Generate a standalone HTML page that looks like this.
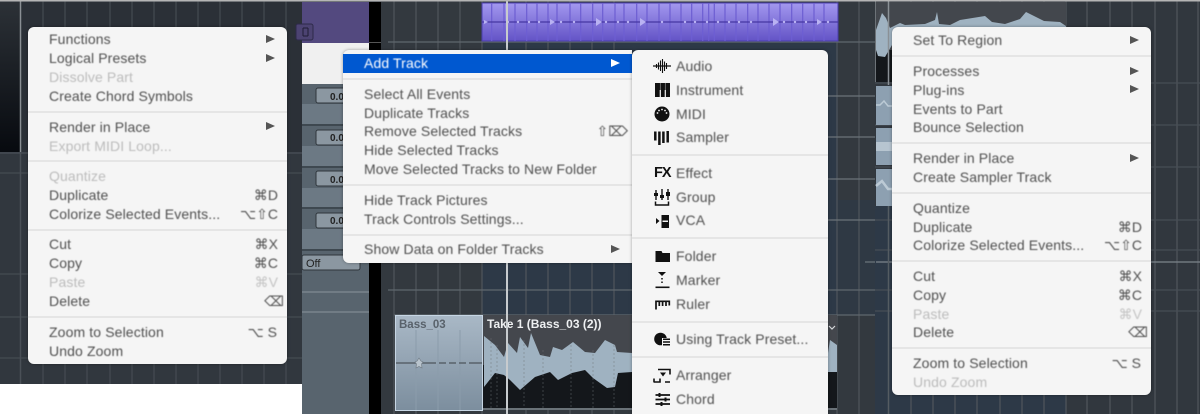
<!DOCTYPE html>
<html><head><meta charset="utf-8">
<style>
html,body{margin:0;padding:0;background:#fff}
#p{position:relative;width:1200px;height:414px;overflow:hidden;background:#fff;font-family:"Liberation Sans",sans-serif}
#bg{position:absolute;left:0;top:0}
.m{position:absolute;background:#f5f5f5;border-radius:6px;box-shadow:0 0 3px rgba(0,0,0,.35)}
.t{position:absolute;font-size:14px;letter-spacing:.12px;line-height:19px;height:19px;color:#505050;white-space:nowrap;filter:blur(.45px)}
.d{color:#bcbcbc}
.s{position:absolute;height:2px;background:#e5e5e5}
.k{position:absolute;font-size:14px;line-height:19px;height:19px;color:#505050;white-space:nowrap;text-align:right;font-family:"Liberation Sans","DejaVu Sans",sans-serif;filter:blur(.45px)}
.k i{font-style:normal;font-family:"DejaVu Sans",sans-serif;font-size:14px}
.a{position:absolute;width:0;height:0;border-left:9px solid #555;border-top:4.5px solid transparent;border-bottom:4.5px solid transparent}
.h{position:absolute;background:#0058d0}
</style></head><body><div id="p">
<svg id="bg" width="1200" height="414" viewBox="0 0 1200 414">
<defs>
<linearGradient id="dk" x1="0" y1="0" x2="0" y2="1"><stop offset="0" stop-color="#2c3137"/><stop offset="1" stop-color="#070a0f"/></linearGradient>
<linearGradient id="pu" x1="0" y1="0" x2="0" y2="1"><stop offset="0" stop-color="#a398ef"/><stop offset="1" stop-color="#6353c6"/></linearGradient>
<linearGradient id="ba" x1="0" y1="0" x2="0" y2="1"><stop offset="0" stop-color="#a9b8c6"/><stop offset="1" stop-color="#7c8e9e"/></linearGradient>
</defs>
<rect width="1200" height="414" fill="#31373e"/>
<rect y="384" width="302" height="30" fill="#fff"/>
<rect x="0" y="2" width="20" height="150" fill="url(#dk)"/>
<rect x="20" y="2" width="282" height="150" fill="#2b3037"/>
<path d="M43 0V384M65 0V384M87 0V384M110 0V384M132 0V384M154 0V384M176 0V384M198 0V384M220 0V384M242 0V384M264 0V384M286 0V384M0 173H302M0 274H302M0 317H302M0 358H302" stroke="#454b52" stroke-width="1.2" fill="none"/>
<path d="M0 153H302" stroke="#464c53" stroke-width="1.5"/>
<path d="M20.500 0V152" stroke="#8a8f94" stroke-width="1.500"/>
<path d="M20.500 152V384" stroke="#4a5057" stroke-width="1.500"/>

<!-- panel 2 left -->
<rect x="302" y="2" width="67" height="41" fill="#53497f"/>
<rect x="296" y="24" width="17" height="16" rx="2" fill="#4c4372" stroke="#2e2a4a"/>
<path d="M303 28v8M308 28v8M303 28h5M303 36h5" stroke="#201d35" fill="none"/>
<rect x="302" y="43" width="67" height="41" fill="#f0f0f0"/>
<rect x="302" y="84" width="67" height="330" fill="#58646e"/>
<rect x="302" y="104" width="67" height="20" fill="#6c7984"/>
<rect x="302" y="146" width="67" height="20" fill="#6c7984"/>
<rect x="302" y="188" width="67" height="20" fill="#6c7984"/>
<rect x="302" y="229" width="67" height="20" fill="#6c7984"/>
<path d="M302 125H369M302 167H369M302 208H369M302 250H369" stroke="#3e4850" stroke-width="2"/>
<g fill="#8b97a1" stroke="#2f363c"><rect x="316" y="88" width="40" height="15" rx="2"/><rect x="316" y="130" width="40" height="15" rx="2"/><rect x="316" y="171" width="40" height="15" rx="2"/><rect x="316" y="213" width="40" height="15" rx="2"/><rect x="302" y="255" width="58" height="15" rx="2"/></g>
<g font-family="Liberation Sans,sans-serif" font-size="10" font-weight="bold" fill="#222"><text x="330" y="100">0.0</text><text x="330" y="141">0.0</text><text x="330" y="183">0.0</text><text x="330" y="224">0.0</text></g>
<text x="306" y="267" font-family="Liberation Sans,sans-serif" font-size="11" fill="#222">Off</text>
<path d="M302 292H381M302 312H381" stroke="#8a949c" stroke-width="1"/>
<rect x="369" y="2" width="12" height="412" fill="#000"/>
<rect x="369" y="42" width="12" height="1" fill="#555"/>
<rect x="381" y="2" width="494" height="412" fill="#33393f"/>
<rect x="482" y="42" width="356" height="273" fill="#2d3947"/>
<rect x="838" y="200" width="37" height="115" fill="#2f3944"/>
<path d="M394 0V414M416 0V414M438 0V414M460 0V414M482 0V414M526 0V414M548 0V414M570 0V414M592 0V414M614 0V414M837 0V414M859 0V414" stroke="#50565c" stroke-width="1.200"/>
<path d="M388 42H875M388 290H875M394 315H875" stroke="#5f676e" stroke-width="1.200"/>
<path d="M828 96H875M828 137H875M828 179H875M828 220H875" stroke="#6b7379" stroke-width="1.200"/>
<path d="M865 262H875" stroke="#7a8288"/>

<!-- purple strip -->
<rect x="482" y="3" width="356" height="38" fill="url(#pu)" stroke="#4a3dac"/>
<path d="M491.700 3V41M504 3V41M515 3V41M526.700 3V41M537 3V41M548 3V41M557 3V41M570 3V41M580.700 3V41M592.700 3V41M602.700 3V41M615 3V41M624 3V41M636.700 3V41M647 3V41M659 3V41M670 3V41M681 3V41M691.700 3V41M702.700 3V41M708.700 3V41M714.300 3V41M725 3V41M736 3V41M747.700 3V41M758 3V41M769 3V41M780 3V41M791.700 3V41M802.700 3V41M814 3V41M824 3V41" stroke="#6d5ed2" stroke-width="1.200"/>
<path d="M482 22H838" stroke="#4637a2" stroke-width="1.200"/>
<g fill="#b9b2f2"><path d="M550 19l5 3-5 3z"/><path d="M596 18l6 4-6 4z"/><path d="M640 18l6 4-6 4z"/><path d="M484 20l4 2-4 2z"/><path d="M773 18l6 4-6 4z"/><path d="M817 19l5 3-5 3z"/><circle cx="508" cy="22" r="1.200"/><circle cx="518" cy="22" r="1.200"/><circle cx="529" cy="22" r="1.200"/><circle cx="539" cy="22" r="1.200"/><circle cx="561" cy="22" r="1.200"/><circle cx="574" cy="22" r="1.200"/><circle cx="606" cy="22" r="1.200"/><circle cx="618" cy="22" r="1.200"/><circle cx="628" cy="22" r="1.200"/><circle cx="662" cy="22" r="1.200"/><circle cx="685" cy="22" r="1.200"/><circle cx="695" cy="22" r="1.200"/><circle cx="707" cy="22" r="1.200"/><circle cx="718" cy="22" r="1.200"/><circle cx="729" cy="22" r="1.200"/><circle cx="739" cy="22" r="1.200"/><circle cx="751" cy="22" r="1.200"/><circle cx="784" cy="22" r="1.200"/><circle cx="795" cy="22" r="1.200"/><circle cx="806" cy="22" r="1.200"/><circle cx="828" cy="22" r="1.200"/></g>

<!-- clips bottom -->
<rect x="395.500" y="315.500" width="87" height="95" fill="url(#ba)" stroke="#c7d6e4"/>
<path d="M416 330V410M438 330V410M460 330V410" stroke="#8b9cab"/>
<path d="M396 363H482" stroke="#59626a" stroke-width="1.500" stroke-dasharray="40 3 7 3 7 3 7 3"/>
<path d="M419 358l2 3 2 1-1.500 2 .5 4-3-1.500-3 1.500.5-4-1.500-2 2-1z" fill="#b9c4cd" stroke="#6c7780" stroke-width=".6"/>
<rect x="483" y="315" width="354" height="95" fill="#44474d"/>
<rect x="483" y="365" width="354" height="45" fill="#14171b"/>
<path d="M484 336L495 345L504 357L508 343L517 353L520 337L528 348L531 333L540 355L550 357L553 347L562 350L573 342L585 352L595 353L605 340L615 345L617 352L632 353L828 353L830 340L837 345V372L830 372H632L618 373L615 387L607 388L593 378L585 370L572 373L558 380L550 372L535 377L520 390L510 380L504 375L495 373L484 387Z" fill="#9fb2c1"/>
<path d="M491 338V408M497 345V408M524 340V408M543 350V408M571 345V408M593 350V408M614 345V408" stroke="#6e7378" stroke-width="1" stroke-dasharray="2 2" opacity=".45"/>
<rect x="483" y="408" width="354" height="2" fill="#6a7278"/>
<text x="399" y="328" font-family="Liberation Sans,sans-serif" font-size="11.500" font-weight="bold" fill="#59626b">Bass_03</text>
<text x="487" y="328" font-family="Liberation Sans,sans-serif" font-size="12" font-weight="bold" fill="#eef0f2">Take 1 (Bass_03 (2))</text>
<path d="M829 326l3 3 3-3" stroke="#d5d8da" fill="none" stroke-width="1.200"/>
<path d="M507 0V414" stroke="#c7cbce" stroke-width="2"/>

<!-- panel 3 -->
<rect x="875" y="2" width="325" height="412" fill="#31373e"/>
<rect x="875" y="206" width="191" height="208" fill="#2d3947"/>
<path d="M911 0V414M933 0V414M955 0V414M977 0V414M1000 0V414M1022 0V414M1044 0V414M1066 0V414M1087 0V414M1110 0V414M1132 0V414M1155 0V414M1177 0V414M1198 0V414" stroke="#50565c" stroke-width="1.200"/>
<path d="M875 83H1200M875 125H1200M875 167H1200M875 220H1200M875 250H1200M875 290H1200M875 311H1200" stroke="#474e55" stroke-width="1.200"/>
<path d="M876 262H1200" stroke="#7c858c" stroke-width="1.200"/>
<rect x="876" y="2" width="190" height="80" fill="#43474d"/>
<rect x="876" y="50" width="16" height="32" fill="#14171b"/>
<path d="M876 30L882 13L886 18L890 28L900 23L905 25L925 24L935 20L937 12L939 24L950 25L960 20L985 16L992 22L1005 24L1020 19L1026 12L1034 16L1044 21L1060 22L1066 26V34H892V45L885 57L878 56L876 50Z" fill="#9fb2c1"/>
<rect x="876" y="86" width="16" height="39" fill="#8da0b1"/>
<rect x="876" y="128" width="16" height="37" fill="#8da0b1"/>
<rect x="876" y="169" width="16" height="37" fill="#8da0b1"/>
<path d="M876 105H880L884 101L888 106H892" stroke="#bccad5" stroke-width="1.500" fill="none"/>
<rect x="876" y="142" width="16" height="9" fill="#b7c5d0"/>
<path d="M876 186L882 181L888 189H892" stroke="#bccad5" stroke-width="2.500" fill="none"/>
<path d="M888.500 0V85" stroke="#8b9196" stroke-width="1.500"/>
<path d="M888.500 206V414" stroke="#555c62" stroke-width="1.500"/>
<rect x="875" y="0" width="1" height="82" fill="#6d7378"/>
<rect x="0" y="0" width="1200" height="1.500" fill="#b5b5b5"/>
</svg>

<!-- MENU 1 -->
<div class="m" style="left:28px;top:27px;width:259px;height:337px"></div>
<div class="t" style="left:49px;top:30px">Functions</div><div class="a" style="left:266px;top:35px"></div>
<div class="t" style="left:49px;top:49px">Logical Presets</div><div class="a" style="left:266px;top:54px"></div>
<div class="t d" style="left:49px;top:68px">Dissolve Part</div>
<div class="t" style="left:49px;top:87px">Create Chord Symbols</div>
<div class="s" style="left:28px;top:111px;width:259px"></div>
<div class="t" style="left:49px;top:118px">Render in Place</div><div class="a" style="left:266px;top:122px"></div>
<div class="t d" style="left:49px;top:137px">Export MIDI Loop...</div>
<div class="s" style="left:28px;top:160px;width:259px"></div>
<div class="t d" style="left:49px;top:167px">Quantize</div>
<div class="t" style="left:49px;top:186px">Duplicate</div><div class="k" style="right:922px;top:186px"><i>⌘</i>D</div>
<div class="t" style="left:49px;top:205px">Colorize Selected Events...</div><div class="k" style="right:922px;top:205px"><i>⌥⇧</i>C</div>
<div class="s" style="left:28px;top:229px;width:259px"></div>
<div class="t" style="left:49px;top:235px">Cut</div><div class="k" style="right:922px;top:235px"><i>⌘</i>X</div>
<div class="t" style="left:49px;top:254px">Copy</div><div class="k" style="right:922px;top:254px"><i>⌘</i>C</div>
<div class="t d" style="left:49px;top:273px">Paste</div><div class="k d" style="right:922px;top:273px;color:#c4c4c4"><i>⌘</i>V</div>
<div class="t" style="left:49px;top:292px">Delete</div><div class="k" style="right:916px;top:292px"><i>⌫</i></div>
<div class="s" style="left:28px;top:316px;width:259px"></div>
<div class="t" style="left:49px;top:323px">Zoom to Selection</div><div class="k" style="right:923px;top:323px"><i>⌥</i> S</div>
<div class="t" style="left:49px;top:342px">Undo Zoom</div>

<!-- MENU 2 -->
<div class="m" style="left:343px;top:50px;width:289px;height:213px;border-radius:6px 0 0 6px"></div>
<div class="h" style="left:343px;top:54px;width:289px;height:19px"></div>
<div class="t" style="left:364px;top:54px;color:#fff">Add Track</div><div class="a" style="left:611px;top:59px;border-left-color:#fff"></div>
<div class="s" style="left:343px;top:78px;width:289px"></div>
<div class="t" style="left:364px;top:85px">Select All Events</div>
<div class="t" style="left:364px;top:104px">Duplicate Tracks</div>
<div class="t" style="left:364px;top:122px">Remove Selected Tracks</div><div class="k" style="right:572px;top:122px"><i>⇧⌦</i></div>
<div class="t" style="left:364px;top:141px">Hide Selected Tracks</div>
<div class="t" style="left:364px;top:160px">Move Selected Tracks to New Folder</div>
<div class="s" style="left:343px;top:184px;width:289px"></div>
<div class="t" style="left:364px;top:191px">Hide Track Pictures</div>
<div class="t" style="left:364px;top:210px">Track Controls Settings...</div>
<div class="s" style="left:343px;top:234px;width:289px"></div>
<div class="t" style="left:364px;top:240px">Show Data on Folder Tracks</div><div class="a" style="left:611px;top:245px"></div>

<!-- SUBMENU -->
<div class="m" style="left:632px;top:50px;width:196px;height:380px"></div>
<div class="t" style="left:676px;top:57px">Audio</div>
<div class="t" style="left:676px;top:81px">Instrument</div>
<div class="t" style="left:676px;top:105px">MIDI</div>
<div class="t" style="left:676px;top:128px">Sampler</div>
<div class="s" style="left:632px;top:154px;width:196px"></div>
<div class="t" style="left:676px;top:164px">Effect</div>
<div class="t" style="left:676px;top:188px">Group</div>
<div class="t" style="left:676px;top:211px">VCA</div>
<div class="s" style="left:632px;top:237px;width:196px"></div>
<div class="t" style="left:676px;top:247px">Folder</div>
<div class="t" style="left:676px;top:271px">Marker</div>
<div class="t" style="left:676px;top:295px">Ruler</div>
<div class="s" style="left:632px;top:321px;width:196px"></div>
<div class="t" style="left:676px;top:330px">Using Track Preset...</div>
<div class="s" style="left:632px;top:356px;width:196px"></div>
<div class="t" style="left:676px;top:366px">Arranger</div>
<div class="t" style="left:676px;top:390px">Chord</div>
<div style="position:absolute;left:654px;top:164px;font:bold 14.500px/18px 'Liberation Sans',sans-serif;color:#111;letter-spacing:-1px">FX</div>
<svg style="position:absolute;left:650px;top:55px" width="26" height="355" viewBox="650 55 26 355" fill="#111">
<!-- audio -->
<path d="M653 66H671" stroke="#111" stroke-width="1.300"/>
<path d="M656.500 64V68M658.500 62.500V69.500M660.500 60.500V71M662.500 59V73M664.500 61.500V71M666.500 63V69" stroke="#111" stroke-width="1.100"/>
<!-- instrument -->
<path d="M655 83h15v14h-15z"/>
<path d="M660.300 90V97M665.300 90V97" stroke="#f5f5f5" stroke-width="1.200"/>
<path d="M660.300 83V90M665.300 83V90" stroke="#f5f5f5" stroke-width=".7" opacity=".55"/>
<!-- midi -->
<circle cx="662" cy="114" r="7.500"/>
<g fill="#f5f5f5"><circle cx="657.500" cy="113" r=".9"/><circle cx="659" cy="110.500" r=".9"/><circle cx="662" cy="109.500" r=".9"/><circle cx="665" cy="110.500" r=".9"/><circle cx="666.500" cy="113" r=".9"/></g>
<!-- sampler -->
<path d="M655.300 131.500V140.500M659.400 131.500V145M663.400 131.500V143M667.700 131V142.500" stroke="#111" stroke-width="2.500"/>
<!-- group -->
<path d="M656 190V200M662 189V200M668 189V200" stroke="#111" stroke-width="1.400"/>
<path d="M654 193h4v3h-4zM660 195h4v3h-4zM666 192h4v4h-4z"/>
<path d="M655.500 201.500V205H668.500V201.500" stroke="#111" stroke-width="1.500" fill="none"/>
<!-- vca -->
<path d="M656 218l3.500 3-3.500 3z"/>
<rect x="661.500" y="215" width="7.500" height="13"/>
<rect x="662.500" y="220.500" width="5.500" height="1.500" fill="#f5f5f5"/>
<!-- folder -->
<path d="M655.500 251h6l1 2h7.500v9h-14.500z"/>
<!-- marker -->
<path d="M658 272h8l-4 4z"/>
<path d="M662 278v1.500M662 281.500v1.500" stroke="#111" stroke-width="1.500"/>
<path d="M655.500 287.300H669.500" stroke="#111" stroke-width="1.600"/>
<!-- ruler -->
<path d="M656 309.500V301.300H669.300V305.500M659.300 301.300V306M662.600 301.300V306M666 301.300V306" stroke="#111" stroke-width="1.700" fill="none"/>
<!-- using -->
<circle cx="660.500" cy="339" r="6.300"/>
<rect x="662" y="338" width="9" height="9.500" fill="#f5f5f5"/>
<path d="M663 339.300H670M663 342H670M663 344.700H670" stroke="#111" stroke-width="1.500"/>
<!-- arranger -->
<path d="M653.500 382H660V378.500M658 369.500H670V374.500M654 378.500V382M665 382H670" stroke="#111" stroke-width="1.600" fill="none"/>
<path d="M660 372.500h6l-3 4z"/>
<!-- chord -->
<path d="M655.500 395H670M655.500 399.500H670M655.500 404H670" stroke="#111" stroke-width="1.800"/>
<path d="M659.500 393V397M665.500 397.500V401.500M661.500 402V406" stroke="#111" stroke-width="2"/>
</svg>

<!-- MENU 3 -->
<div class="m" style="left:892px;top:27px;width:259px;height:368px"></div>
<div class="t" style="left:913px;top:31px">Set To Region</div><div class="a" style="left:1130px;top:36px"></div>
<div class="s" style="left:892px;top:55px;width:259px"></div>
<div class="t" style="left:913px;top:62px">Processes</div><div class="a" style="left:1130px;top:67px"></div>
<div class="t" style="left:913px;top:81px">Plug-ins</div><div class="a" style="left:1130px;top:85px"></div>
<div class="t" style="left:913px;top:100px">Events to Part</div>
<div class="t" style="left:913px;top:118px">Bounce Selection</div>
<div class="s" style="left:892px;top:142px;width:259px"></div>
<div class="t" style="left:913px;top:149px">Render in Place</div><div class="a" style="left:1130px;top:154px"></div>
<div class="t" style="left:913px;top:168px">Create Sampler Track</div>
<div class="s" style="left:892px;top:192px;width:259px"></div>
<div class="t" style="left:913px;top:199px">Quantize</div>
<div class="t" style="left:913px;top:218px">Duplicate</div><div class="k" style="right:58px;top:218px"><i>⌘</i>D</div>
<div class="t" style="left:913px;top:236px">Colorize Selected Events...</div><div class="k" style="right:58px;top:236px"><i>⌥⇧</i>C</div>
<div class="s" style="left:892px;top:260px;width:259px"></div>
<div class="t" style="left:913px;top:267px">Cut</div><div class="k" style="right:58px;top:267px"><i>⌘</i>X</div>
<div class="t" style="left:913px;top:286px">Copy</div><div class="k" style="right:58px;top:286px"><i>⌘</i>C</div>
<div class="t d" style="left:913px;top:305px">Paste</div><div class="k" style="right:58px;top:305px;color:#c4c4c4"><i>⌘</i>V</div>
<div class="t" style="left:913px;top:323px">Delete</div><div class="k" style="right:52px;top:323px"><i>⌫</i></div>
<div class="s" style="left:892px;top:347px;width:259px"></div>
<div class="t" style="left:913px;top:354px">Zoom to Selection</div><div class="k" style="right:59px;top:354px"><i>⌥</i> S</div>
<div class="t d" style="left:913px;top:373px">Undo Zoom</div>
</div></body></html>
